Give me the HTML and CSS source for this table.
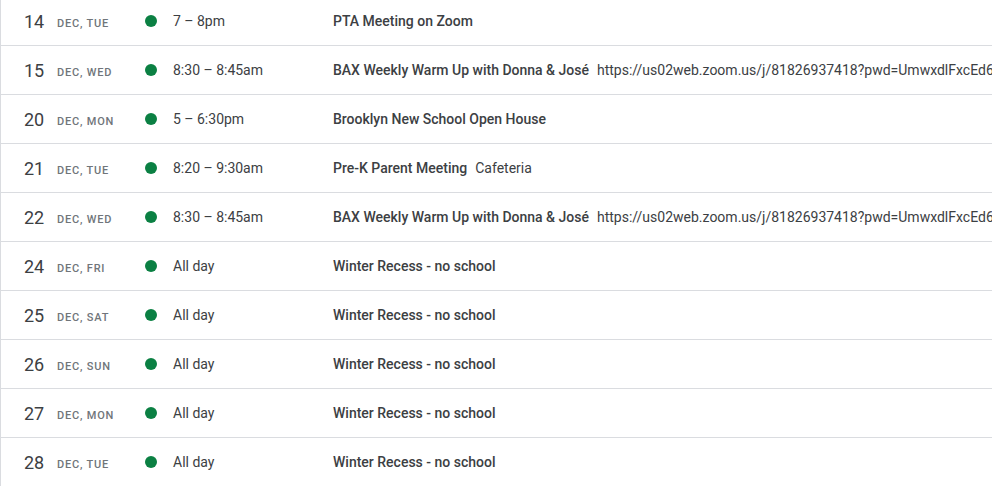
FILE: index.html
```html
<!DOCTYPE html>
<html>
<head>
<meta charset="utf-8">
<link rel="stylesheet" href="styles.css">
</head>
<body>
<div class="agenda">
  <div class="row"><span class="day">14</span><span class="mon">Dec, Tue</span><span class="dot"></span><span class="time">7 – 8pm</span><span class="title">PTA Meeting on Zoom</span></div>
  <div class="row"><span class="day">15</span><span class="mon">Dec, Wed</span><span class="dot"></span><span class="time">8:30 – 8:45am</span><span class="title">BAX Weekly Warm Up with Donna &amp; José<span class="loc">https://us02web.zoom.us/j/81826937418?pwd=UmwxdlFxcEd6</span></span></div>
  <div class="row"><span class="day">20</span><span class="mon">Dec, Mon</span><span class="dot"></span><span class="time">5 – 6:30pm</span><span class="title">Brooklyn New School Open House</span></div>
  <div class="row"><span class="day">21</span><span class="mon">Dec, Tue</span><span class="dot"></span><span class="time">8:20 – 9:30am</span><span class="title">Pre-K Parent Meeting<span class="loc">Cafeteria</span></span></div>
  <div class="row"><span class="day">22</span><span class="mon">Dec, Wed</span><span class="dot"></span><span class="time">8:30 – 8:45am</span><span class="title">BAX Weekly Warm Up with Donna &amp; José<span class="loc">https://us02web.zoom.us/j/81826937418?pwd=UmwxdlFxcEd6</span></span></div>
  <div class="row"><span class="day">24</span><span class="mon">Dec, Fri</span><span class="dot"></span><span class="time">All day</span><span class="title">Winter Recess - no school</span></div>
  <div class="row"><span class="day">25</span><span class="mon">Dec, Sat</span><span class="dot"></span><span class="time">All day</span><span class="title">Winter Recess - no school</span></div>
  <div class="row"><span class="day">26</span><span class="mon">Dec, Sun</span><span class="dot"></span><span class="time">All day</span><span class="title">Winter Recess - no school</span></div>
  <div class="row"><span class="day">27</span><span class="mon">Dec, Mon</span><span class="dot"></span><span class="time">All day</span><span class="title">Winter Recess - no school</span></div>
  <div class="row"><span class="day">28</span><span class="mon">Dec, Tue</span><span class="dot"></span><span class="time">All day</span><span class="title">Winter Recess - no school</span></div>
</div>
</body>
</html>
```
FILE: styles.css
```css
html, body { margin: 0; padding: 0; background: #fff; }
body { font-family: Roboto, "Liberation Sans", sans-serif; color: #3c4043; width: 992px; height: 486px; overflow: hidden; }
.agenda { border-left: 1px solid #dadce0; margin-top: -3px; }
.row {
  display: flex; align-items: center; height: 48px;
  border-bottom: 1px solid #dadce0; white-space: nowrap; overflow: hidden;
}
.row > span { flex: none; }
.day { width: 20px; margin-left: 23px; font-size: 18px; font-weight: 400; color: #3c4043; }
.mon { margin-left: 13px; width: 88px; font-size: 11px; font-weight: 500; text-transform: uppercase; letter-spacing: 0.8px; color: #70757a; padding-top: 4px; }
.dot { width: 12px; height: 12px; border-radius: 50%; background: #0b8043; }
.time { margin-left: 16px; width: 160px; font-size: 14px; }
.title { font-size: 14px; font-weight: 500; }
.loc { font-weight: 400; margin-left: 8px; }
```
